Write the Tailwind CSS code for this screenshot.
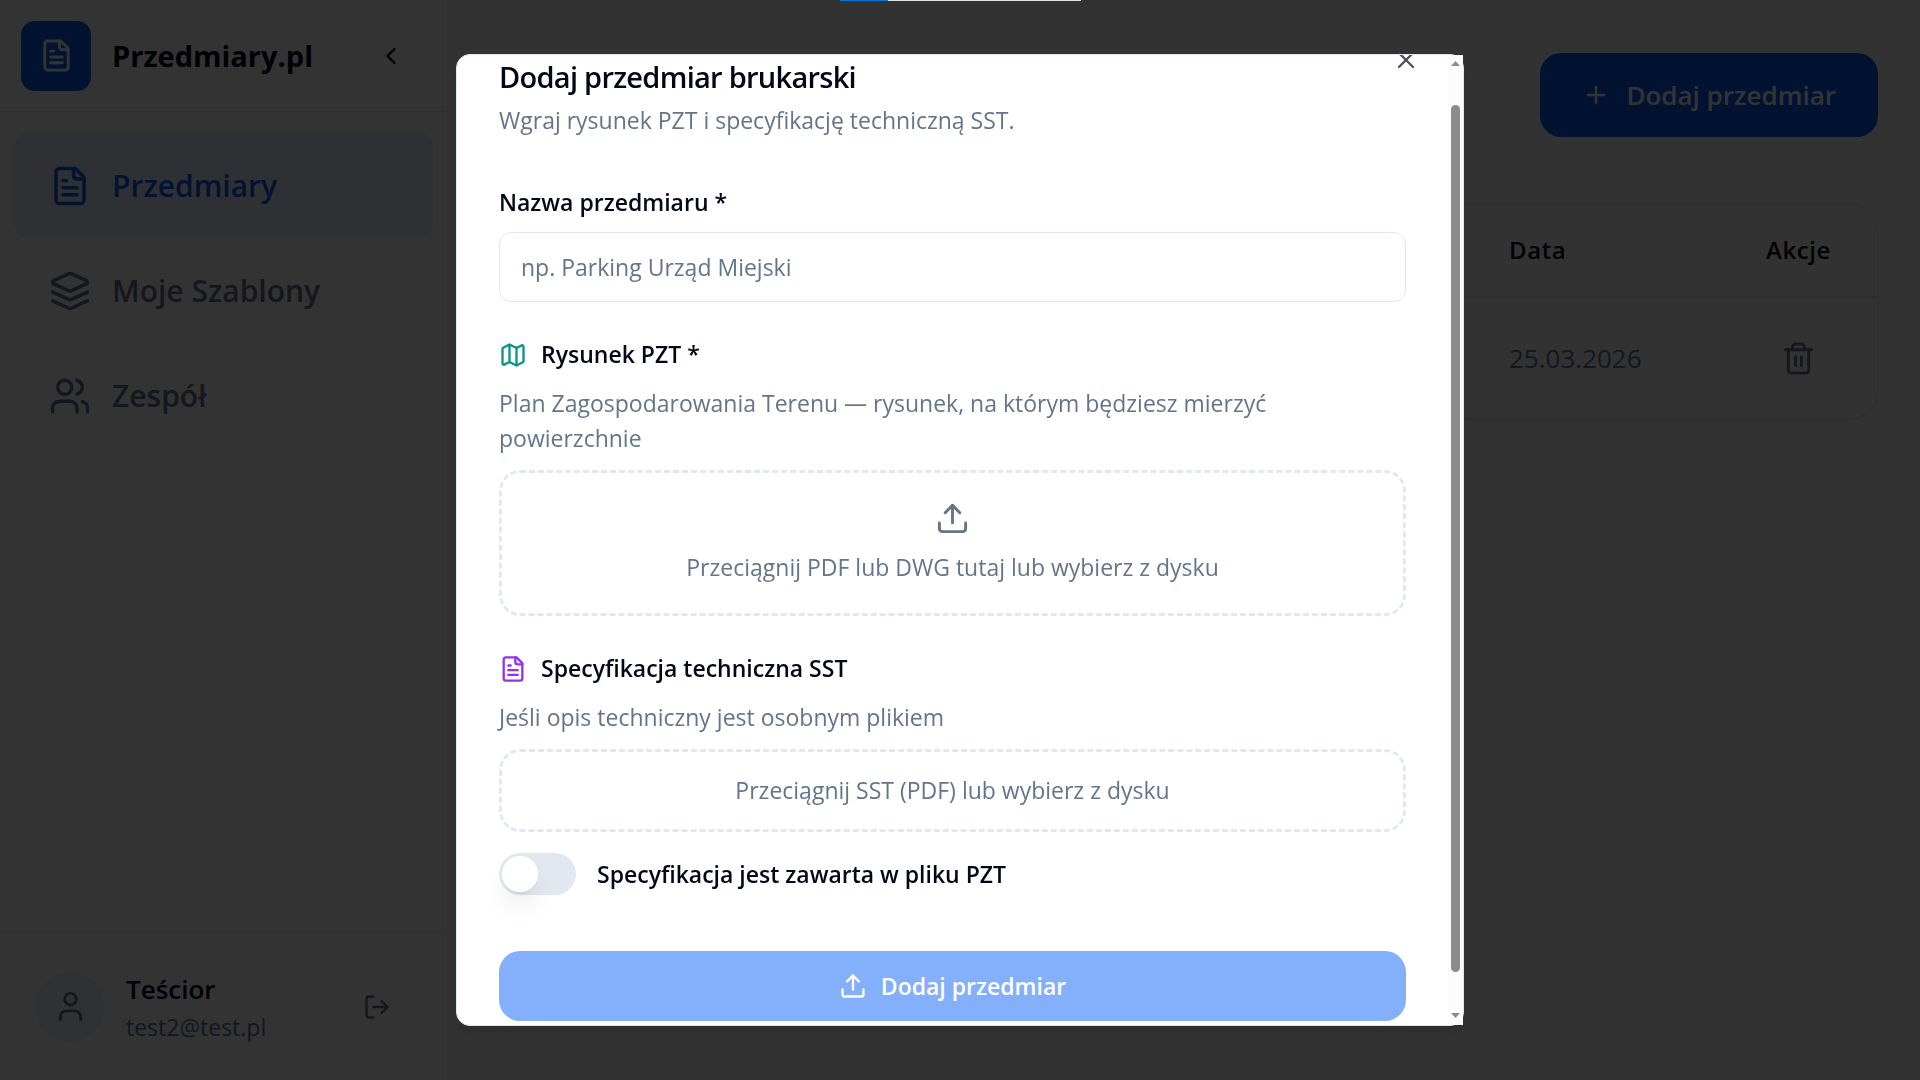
<!DOCTYPE html>
<html lang="pl">
<head>
  <meta charset="UTF-8" />
  <meta name="viewport" content="width=device-width, initial-scale=1.0"/>
  <title>Przedmiary.pl | Dodaj przedmiar</title>
  <script src="https://cdn.jsdelivr.net/npm/@tailwindcss/browser@4"></script>
</head>
<body class="h-screen overflow-hidden bg-[#f8fafc] font-['Segoe_UI','Open_Sans','Noto_Sans',sans-serif] text-[#020817]">

  <!-- Icon sprite -->
  <svg class="hidden" fill="none" stroke="currentColor">
    <symbol id="file-text" viewBox="0 0 24 24">
      <path d="M15 2H6a2 2 0 0 0-2 2v16a2 2 0 0 0 2 2h12a2 2 0 0 0 2-2V7Z"/>
      <path d="M14 2v4a2 2 0 0 0 2 2h4"/>
      <path d="M10 9H8"/><path d="M16 13H8"/><path d="M16 17H8"/>
    </symbol>
    <symbol id="upload" viewBox="0 0 24 24">
      <path d="M21 15v4a2 2 0 0 1-2 2H5a2 2 0 0 1-2-2v-4"/>
      <path d="m17 8-5-5-5 5"/><path d="M12 3v12"/>
    </symbol>
  </svg>

  <div class="flex h-full">
    <!-- Sidebar -->
    <aside class="flex w-[448px] shrink-0 flex-col border-r border-[#e2e8f0] bg-white">
      <div class="flex h-28 shrink-0 items-center border-b border-[#e2e8f0] pl-[21px] pr-[42px]">
        <div class="flex size-[70px] items-center justify-center rounded-[14px] bg-[#0b61f7] text-white">
          <svg class="size-[35px]" fill="none" stroke="currentColor" stroke-width="2" stroke-linecap="round" stroke-linejoin="round"><use href="#file-text"/></svg>
        </div>
        <span class="ml-[21px] text-[29px] font-bold">Przedmiary.pl</span>
        <button type="button" aria-label="Zwiń menu" class="ml-auto">
          <svg class="size-7" viewBox="0 0 24 24" fill="none" stroke="currentColor" stroke-width="2" stroke-linecap="round" stroke-linejoin="round"><path d="m15 18-6-6 6-6"/></svg>
        </button>
      </div>

      <nav class="flex flex-1 flex-col px-[14px] pt-[21px] text-[30px] font-semibold text-[#64748b]">
        <a href="#" class="flex h-[105px] items-center gap-[21px] rounded-[14px] bg-[#0b61f7]/10 px-[35px] text-[#0b61f7]">
          <svg class="size-[42px]" fill="none" stroke="currentColor" stroke-width="2" stroke-linecap="round" stroke-linejoin="round"><use href="#file-text"/></svg>
          Przedmiary
        </a>
        <a href="#" class="flex h-[105px] items-center gap-[21px] rounded-[14px] px-[35px]">
          <svg class="size-[42px]" viewBox="0 0 24 24" fill="none" stroke="currentColor" stroke-width="2" stroke-linecap="round" stroke-linejoin="round"><path d="m12.83 2.18a2 2 0 0 0-1.66 0L2.6 6.08a1 1 0 0 0 0 1.83l8.58 3.91a2 2 0 0 0 1.66 0l8.58-3.9a1 1 0 0 0 0-1.83Z"/><path d="m22 17.65-9.17 4.16a2 2 0 0 1-1.66 0L2 17.65"/><path d="m22 12.65-9.17 4.16a2 2 0 0 1-1.66 0L2 12.65"/></svg>
          Moje Szablony
        </a>
        <a href="#" class="flex h-[105px] items-center gap-[21px] rounded-[14px] px-[35px]">
          <svg class="size-[42px]" viewBox="0 0 24 24" fill="none" stroke="currentColor" stroke-width="2" stroke-linecap="round" stroke-linejoin="round"><path d="M16 21v-2a4 4 0 0 0-4-4H6a4 4 0 0 0-4 4v2"/><circle cx="9" cy="7" r="4"/><path d="M22 21v-2a4 4 0 0 0-3-3.87"/><path d="M16 3.13a4 4 0 0 1 0 7.75"/></svg>
          Zespół
        </a>
      </nav>

      <div class="flex h-[148px] shrink-0 items-center border-t border-[#e2e8f0] pl-[35px] pr-14">
        <div class="flex size-[70px] items-center justify-center rounded-full bg-[#f1f5f9] text-[#64748b]">
          <svg class="size-[35px]" viewBox="0 0 24 24" fill="none" stroke="currentColor" stroke-width="2" stroke-linecap="round" stroke-linejoin="round"><path d="M19 21v-2a4 4 0 0 0-4-4H9a4 4 0 0 0-4 4v2"/><circle cx="12" cy="7" r="4"/></svg>
        </div>
        <div class="ml-[21px]">
          <p class="text-[26px] leading-[40px] font-semibold">Teścior</p>
          <p class="text-[23px] leading-[36px] text-[#64748b]">test2@test.pl</p>
        </div>
        <button type="button" aria-label="Wyloguj" class="ml-auto text-[#64748b]">
          <svg class="size-7" viewBox="0 0 24 24" fill="none" stroke="currentColor" stroke-width="2" stroke-linecap="round" stroke-linejoin="round"><path d="M9 21H5a2 2 0 0 1-2-2V5a2 2 0 0 1 2-2h4"/><path d="m16 17 5-5-5-5"/><path d="M21 12H9"/></svg>
        </button>
      </div>
    </aside>

    <!-- Main content -->
    <main class="flex-1 px-[42px] pt-[53px]">
      <div class="flex justify-end">
        <button type="button" class="flex h-[84px] items-center gap-4 rounded-[21px] bg-[#0b61f7] px-[42px] text-[26px] font-semibold text-white">
          <svg class="size-7" viewBox="0 0 24 24" fill="none" stroke="currentColor" stroke-width="2" stroke-linecap="round"><path d="M5 12h14"/><path d="M12 5v14"/></svg>
          Dodaj przedmiar
        </button>
      </div>

      <div class="mt-[66px] overflow-hidden rounded-[28px] border border-[#e2e8f0] bg-[#fafafa] shadow-sm">
        <table class="w-full table-fixed text-left">
          <thead>
            <tr class="h-[93px] border-b-2 border-[#e2e8f0] text-[24px]">
              <td></td>
              <th class="w-[200px] pl-8 font-semibold tracking-wide">Data</th>
              <th class="w-[200px] pr-[46px] text-right font-semibold tracking-wide">Akcje</th>
            </tr>
          </thead>
          <tbody>
            <tr class="h-[121px] text-[26px] text-[#64748b]">
              <td></td>
              <td class="pl-8">25.03.2026</td>
              <td class="pr-[61px]">
                <button type="button" aria-label="Usuń" class="ml-auto block">
                  <svg class="size-[35px]" viewBox="0 0 24 24" fill="none" stroke="currentColor" stroke-width="2" stroke-linecap="round" stroke-linejoin="round"><path d="M3 6h18"/><path d="M19 6v14a2 2 0 0 1-2 2H7a2 2 0 0 1-2-2V6"/><path d="M8 6V4a2 2 0 0 1 2-2h4a2 2 0 0 1 2 2v2"/><path d="M10 11v6"/><path d="M14 11v6"/></svg>
                </button>
              </td>
            </tr>
          </tbody>
        </table>
      </div>
    </main>
  </div>

  <!-- Overlay + dialog -->
  <div class="fixed inset-0 flex items-center justify-center bg-black/80">
    <div class="absolute top-0 left-[840px] flex h-px w-[241px] bg-[#e1e5e4]">
      <div class="w-1/5 bg-[#0078d7]"></div>
    </div>

    <div role="dialog" aria-labelledby="dialogTitle" class="relative h-[90vh] w-full max-w-[1008px] rounded-[14px] border border-[#e2e8f0] bg-white shadow-lg">
      <div class="relative h-full overflow-hidden rounded-[13px] pr-[57px] pl-[42px]">
        <button type="button" aria-label="Zamknij" class="absolute -top-[9px] right-[43px] text-[#4b5363]">
          <svg class="size-7" viewBox="0 0 24 24" fill="none" stroke="currentColor" stroke-width="2" stroke-linecap="round"><path d="M18 6 6 18"/><path d="m6 6 12 12"/></svg>
        </button>

        <h2 id="dialogTitle" class="pt-[2px] text-[29px] leading-[40px] font-semibold tracking-tight">Dodaj przedmiar brukarski</h2>
        <p class="mt-[6px] text-[23px] leading-[35px] text-[#64748b]">Wgraj rysunek PZT i specyfikację techniczną SST.</p>

        <form class="text-[23px] leading-[35px]">
          <label for="name" class="mt-[47px] block font-semibold">Nazwa przedmiaru *</label>
          <input id="name" type="text" placeholder="np. Parking Urząd Miejski" class="mt-3 block h-[70px] w-full rounded-[12px] border border-[#e2e8f0] px-[21px] placeholder:text-[#64748b]">

          <label for="pzt" class="mt-[35px] flex items-center gap-[14px] font-semibold">
            <svg class="size-7 text-[#0d9488]" viewBox="0 0 24 24" fill="none" stroke="currentColor" stroke-width="2" stroke-linecap="round" stroke-linejoin="round"><path d="M14.106 5.553a2 2 0 0 0 1.788 0l3.659-1.83A1 1 0 0 1 21 4.619v12.764a1 1 0 0 1-.553.894l-4.553 2.277a2 2 0 0 1-1.788 0l-4.212-2.106a2 2 0 0 0-1.788 0l-3.659 1.83A1 1 0 0 1 3 19.381V6.618a1 1 0 0 1 .553-.894l4.553-2.277a2 2 0 0 1 1.788 0z"/><path d="M15 5.764v15"/><path d="M9 3.236v15"/></svg>
            Rysunek PZT *
          </label>
          <p class="mt-[14px] pr-[100px] text-[#64748b]">Plan Zagospodarowania Terenu — rysunek, na którym będziesz mierzyć powierzchnie</p>
          <button id="pzt" type="button" class="mt-[14px] flex h-[146px] w-full flex-col items-center justify-center gap-[14px] rounded-[21px] border-3 border-dashed border-[#e2e8f0] text-[#64748b]">
            <svg class="size-[35px]" fill="none" stroke="currentColor" stroke-width="2" stroke-linecap="round" stroke-linejoin="round"><use href="#upload"/></svg>
            Przeciągnij PDF lub DWG tutaj lub wybierz z dysku
          </button>

          <label for="sst" class="mt-[35px] flex items-center gap-[14px] font-semibold">
            <svg class="size-7 text-[#9333ea]" fill="none" stroke="currentColor" stroke-width="2" stroke-linecap="round" stroke-linejoin="round"><use href="#file-text"/></svg>
            Specyfikacja techniczna SST
          </label>
          <p class="mt-[14px] text-[#64748b]">Jeśli opis techniczny jest osobnym plikiem</p>
          <button id="sst" type="button" class="mt-[14px] flex h-[83px] w-full items-center justify-center rounded-[21px] border-3 border-dashed border-[#e2e8f0] text-[#64748b]">
            Przeciągnij SST (PDF) lub wybierz z dysku
          </button>

          <div class="mt-[21px] flex items-center gap-[21px]">
            <button id="inPzt" type="button" role="switch" aria-checked="false" class="h-[42px] w-[77px] rounded-full bg-[#e2e8f0] p-[3px]">
              <span class="block size-9 rounded-full bg-white shadow-[0_18px_26px_-5px_rgba(0,0,0,0.1),0_7px_10px_-7px_rgba(0,0,0,0.1)]"></span>
            </button>
            <label for="inPzt" class="font-semibold">Specyfikacja jest zawarta w pliku PZT</label>
          </div>

          <button type="submit" disabled class="mt-14 flex h-[70px] w-full items-center justify-center gap-[14px] rounded-[21px] bg-[#0b61f7] font-semibold text-white opacity-50">
            <svg class="size-7" fill="none" stroke="currentColor" stroke-width="2" stroke-linecap="round" stroke-linejoin="round"><use href="#upload"/></svg>
            Dodaj przedmiar
          </button>
        </form>
      </div>

      <!-- Scrollbar -->
      <div class="absolute inset-y-0 right-0 flex w-[15px] flex-col items-center bg-[#fcfcfc]">
        <svg class="my-[6px] h-[5px] w-[9px]" viewBox="0 0 9 5" fill="#8b8b8b"><path d="M4.5 0 9 5H0z"/></svg>
        <div class="mt-[33px] h-[867px] w-[9px] rounded-full bg-[#8b8b8b]"></div>
        <svg class="mt-auto mb-[7px] h-[5px] w-[9px]" viewBox="0 0 9 5" fill="#8b8b8b"><path d="M4.5 5 9 0H0z"/></svg>
      </div>
    </div>
  </div>
</body>
</html>
